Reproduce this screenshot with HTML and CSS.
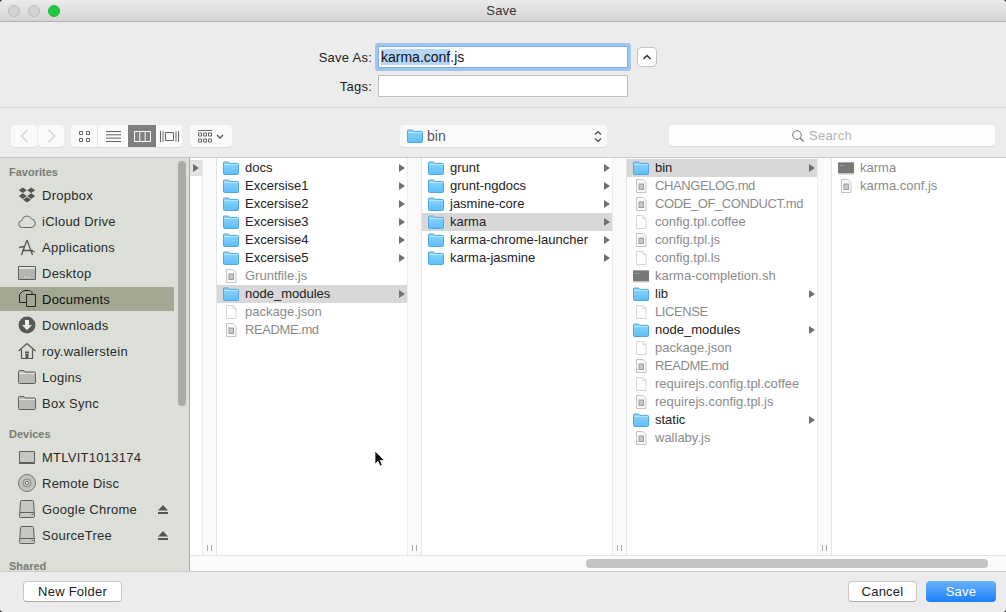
FILE: index.html
```html
<!DOCTYPE html>
<html>
<head>
  <meta charset="utf-8">
  <title>Save</title>
  <link rel="stylesheet" href="styles.css">
</head>
<body>
  <svg class="defs" aria-hidden="true">
    <defs>
      <linearGradient id="folderFill" x1="0" y1="0" x2="0" y2="1">
        <stop offset="0" stop-color="#8fd6fc"/>
        <stop offset="1" stop-color="#5fbdf6"/>
      </linearGradient>
      <symbol id="folder" viewBox="0 0 16 14">
        <path d="M.5 2a1 1 0 0 1 1-1h4l1.3 1.4h7.700a1 1 0 0 1 1 1V12.500a1 1 0 0 1-1 1h-13a1 1 0 0 1-1-1z" fill="url(#folderFill)" stroke="#4ea6e2"/>
        <path d="M1 3.500h14" stroke="#b5e5fd" fill="none"/>
      </symbol>
      <symbol id="doc" viewBox="0 0 16 14">
        <path d="M3.500.5h6.500l3 3v10h-9.500z" fill="#fafafa" stroke="#c4c4c4"/>
        <path d="M5.500 4.500h5.500v6.500h-5.500z" fill="#9c9c9c"/>
        <path d="M6.500 5.500h3.500v4.500h-3.500z" fill="#c8c8c8"/>
      </symbol>
      <symbol id="blank" viewBox="0 0 16 14">
        <path d="M3.500.5h6.500l3 3v10h-9.500z" fill="#fff" stroke="#d6d6d6"/>
        <path d="M10 .5v3h3" fill="none" stroke="#d6d6d6"/>
      </symbol>
      <symbol id="term" viewBox="0 0 16 14">
        <path d="M0 1h16v11h-16z" fill="#777976"/>
        <path d="M0 1h16v1h-16z" fill="#a8a8a8"/>
        <path d="M0 12h16v1.500h-16z" fill="#c4c4c4"/>
        <path d="M2 4.500h1.500M4.500 4.500h1.500" stroke="#86c78f"/>
      </symbol>
      <symbol id="gfolder" viewBox="0 0 18 15">
        <path d="M.5 2a1 1 0 0 1 1-1h4.500l1.300 1.500h9.200a1 1 0 0 1 1 1v9.500a1 1 0 0 1-1 1h-15a1 1 0 0 1-1-1z" fill="#b9bbb5" stroke="#5f605c"/>
        <path d="M1 4h16" stroke="#e4e5e1"/>
      </symbol>
      <symbol id="drive" viewBox="0 0 18 18">
        <path d="M3.500.5h11a1 1 0 0 1 1 1l1 15a1 1 0 0 1-1 1h-13a1 1 0 0 1-1-1l1-15a1 1 0 0 1 1-1z" fill="#c5c7c1" stroke="#5f605c"/>
        <path d="M2 12.500h14" stroke="#5f605c"/>
        <path d="M13.500 14.500h1.500" stroke="#5f605c"/>
      </symbol>
      <symbol id="eject" viewBox="0 0 10 9">
        <path d="M5 0l5 5.500h-10zM0 7h10v2h-10z" fill="#555"/>
      </symbol>
    </defs>
  </svg>

  <div class="window">
    <div class="titlebar">
      <span class="light"></span>
      <span class="light"></span>
      <span class="light green"></span>
      <span class="title">Save</span>
    </div>

    <div class="form">
      <div class="form-row">
        <label class="form-label">Save As:</label>
        <div class="field focused"><span class="selected-text">karma.conf</span>.js</div>
        <button class="disclose">
          <svg width="10" height="6" viewBox="0 0 10 6"><path d="M1.500 5l3.500-3.500 3.500 3.500" fill="none" stroke="#333" stroke-width="1.500"/></svg>
        </button>
      </div>
      <div class="form-row">
        <label class="form-label">Tags:</label>
        <div class="field"></div>
      </div>
    </div>

    <div class="toolbar">
      <div class="nav-group">
        <button class="tool nav">
          <svg width="9" height="14" viewBox="0 0 9 14"><path d="M7.500 1l-6 6 6 6" fill="none" stroke="#d4d4d4" stroke-width="1.500"/></svg>
        </button>
        <button class="tool nav">
          <svg width="9" height="14" viewBox="0 0 9 14"><path d="M1.500 1l6 6-6 6" fill="none" stroke="#d4d4d4" stroke-width="1.500"/></svg>
        </button>
      </div>
      <div class="view-group">
        <button class="view v-icons">
          <svg width="11" height="11" viewBox="0 0 11 11"><path d="M.5.5h3v3h-3zM7.500.5h3v3h-3zM.5 7.500h3v3h-3zM7.500 7.500h3v3h-3z" fill="none" stroke="#666"/></svg>
        </button>
        <button class="view v-list">
          <svg width="15" height="11" viewBox="0 0 15 11"><path d="M0 .5h15M0 3.800h15M0 7.100h15M0 10.500h15" stroke="#666"/></svg>
        </button>
        <button class="view v-cols on">
          <svg width="17" height="11" viewBox="0 0 17 11"><path d="M.5.5h16v10h-16zM5.800.5v10M11.200.5v10" fill="none" stroke="#fff"/></svg>
        </button>
        <button class="view v-flow">
          <svg width="19" height="11" viewBox="0 0 19 11"><path d="M5.500 1.500h8v8h-8zM.5 0v11M3 .5v10M16 .5v10M18.500 0v11" fill="none" stroke="#666"/></svg>
        </button>
      </div>
      <button class="tool arrange">
        <svg width="14" height="13" viewBox="0 0 14 13"><path d="M0 .5h14M.5 3h3v3h-3zM5.500 3h3v3h-3zM10.500 3h3v3h-3zM.5 9h3v3h-3zM5.500 9h3v3h-3zM10.500 9h3v3h-3z" fill="none" stroke="#666"/></svg>
        <svg width="8" height="5" viewBox="0 0 8 5"><path d="M1 1l3 3 3-3" fill="none" stroke="#555" stroke-width="1.300"/></svg>
      </button>
      <div class="location">
        <svg class="ic" width="16" height="14"><use href="#folder"/></svg>
        <span class="location-name">bin</span>
        <svg class="updown" width="8" height="13" viewBox="0 0 8 13"><path d="M1 4.500l3-3 3 3M1 8.500l3 3 3-3" fill="none" stroke="#444" stroke-width="1.200"/></svg>
      </div>
      <div class="search">
        <svg width="12" height="12" viewBox="0 0 12 12"><circle cx="5" cy="5" r="4.300" fill="none" stroke="#777"/><path d="M8 8l3.500 3.500" stroke="#777" stroke-width="1.200"/></svg>
        <span>Search</span>
      </div>
    </div>

    <div class="browser">
      <div class="sidebar">
        <div class="side-head">Favorites</div>
        <div class="side-row">
          <svg class="side-ic" viewBox="0 0 18 18"><path d="M4.800 1.500l4 2.800-4 2.800-4-2.800zM13.200 1.500l4 2.800-4 2.800-4-2.800zM4.800 7.300l4 2.800-4 2.800-4-2.800zM13.200 7.300l4 2.800-4 2.800-4-2.800zM9 11l4 2.700-4 2.800-4-2.800z" fill="#55564f"/></svg>
          <span>Dropbox</span>
        </div>
        <div class="side-row">
          <svg class="side-ic" viewBox="0 0 18 18"><path d="M4.500 15.500a3.500 3.500 0 0 1-.5-7 5 5 0 0 1 9.500-1.500 4.300 4.300 0 0 1 .3 8.500z" fill="none" stroke="#666"/></svg>
          <span>iCloud Drive</span>
        </div>
        <div class="side-row">
          <svg class="side-ic" viewBox="0 0 18 18"><path d="M9 2l5.500 15M9 2l-5.500 15M4 12.500h11M1 9.500l5-1M17 14l-3-1" fill="none" stroke="#555" stroke-width="1.300"/></svg>
          <span>Applications</span>
        </div>
        <div class="side-row">
          <svg class="side-ic" viewBox="0 0 18 18"><path d="M.5 2.500h17v13h-17z" fill="#e2e3df" stroke="#5f605c"/><path d="M1 5h16v10h-16z" fill="#b4b6b0"/><path d="M6 13h1M8.500 13h1M11 13h1" stroke="#eee"/></svg>
          <span>Desktop</span>
        </div>
        <div class="side-row on">
          <svg class="side-ic" viewBox="0 0 18 18"><path d="M7 .5h5l2 2v2h3.500v12h-9v-4h-7v-8l3-3z" fill="none" stroke="#222"/><path d="M8.500 12.500v-8h5.500" fill="none" stroke="#222"/></svg>
          <span>Documents</span>
        </div>
        <div class="side-row">
          <svg class="side-ic" viewBox="0 0 18 18"><circle cx="9" cy="9" r="8.500" fill="#595a56"/><path d="M7 4h4v5h3l-5 5-5-5h3z" fill="#eee"/></svg>
          <span>Downloads</span>
        </div>
        <div class="side-row">
          <svg class="side-ic" viewBox="0 0 18 18"><path d="M.5 9l8.500-7.500 8.500 7.500M3.500 7.500v9h11v-9" fill="none" stroke="#555" stroke-width="1.200"/><path d="M7 9.500h4v2h-4zM7.500 12h3v4.500h-3z" fill="#555"/></svg>
          <span>roy.wallerstein</span>
        </div>
        <div class="side-row">
          <svg class="side-ic" width="18" height="15"><use href="#gfolder"/></svg>
          <span>Logins</span>
        </div>
        <div class="side-row">
          <svg class="side-ic" width="18" height="15"><use href="#gfolder"/></svg>
          <span>Box Sync</span>
        </div>

        <div class="side-head gap">Devices</div>
        <div class="side-row">
          <svg class="side-ic" viewBox="0 0 18 18"><path d="M1.500 3.500h15v11h-15z" fill="#c5c7c1" stroke="#5f605c"/><path d="M1 15.500h16" stroke="#5f605c"/></svg>
          <span>MTLVIT1013174</span>
        </div>
        <div class="side-row">
          <svg class="side-ic" viewBox="0 0 18 18"><circle cx="9" cy="9" r="8.500" fill="#c2c4be" stroke="#777"/><circle cx="9" cy="9" r="4" fill="none" stroke="#8a8b86"/><circle cx="9" cy="9" r="1.700" fill="#e8e8e4" stroke="#777"/></svg>
          <span>Remote Disc</span>
        </div>
        <div class="side-row">
          <svg class="side-ic" width="18" height="18"><use href="#drive"/></svg>
          <span>Google Chrome</span>
          <svg class="eject" width="10" height="9"><use href="#eject"/></svg>
        </div>
        <div class="side-row">
          <svg class="side-ic" width="18" height="18"><use href="#drive"/></svg>
          <span>SourceTree</span>
          <svg class="eject" width="10" height="9"><use href="#eject"/></svg>
        </div>

        <div class="side-head gap">Shared</div>
        <div class="side-scroll"></div>
      </div>

      <div class="panes">
        <div class="columns">
          <div class="col stub"><div class="stub-row"></div></div>
          <div class="gutter"><span class="grip"></span></div>

          <div class="col">
            <div class="row dir"><svg class="ic" width="16" height="14"><use href="#folder"/></svg>docs</div>
            <div class="row dir"><svg class="ic" width="16" height="14"><use href="#folder"/></svg>Excersise1</div>
            <div class="row dir"><svg class="ic" width="16" height="14"><use href="#folder"/></svg>Excersise2</div>
            <div class="row dir"><svg class="ic" width="16" height="14"><use href="#folder"/></svg>Excersise3</div>
            <div class="row dir"><svg class="ic" width="16" height="14"><use href="#folder"/></svg>Excersise4</div>
            <div class="row dir"><svg class="ic" width="16" height="14"><use href="#folder"/></svg>Excersise5</div>
            <div class="row"><svg class="ic" width="16" height="14"><use href="#doc"/></svg>Gruntfile.js</div>
            <div class="row dir sel"><svg class="ic" width="16" height="14"><use href="#folder"/></svg>node_modules</div>
            <div class="row"><svg class="ic" width="16" height="14"><use href="#blank"/></svg>package.json</div>
            <div class="row caps"><svg class="ic" width="16" height="14"><use href="#doc"/></svg>README.md</div>
          </div>
          <div class="gutter"><span class="grip"></span></div>

          <div class="col">
            <div class="row dir"><svg class="ic" width="16" height="14"><use href="#folder"/></svg>grunt</div>
            <div class="row dir"><svg class="ic" width="16" height="14"><use href="#folder"/></svg>grunt-ngdocs</div>
            <div class="row dir"><svg class="ic" width="16" height="14"><use href="#folder"/></svg>jasmine-core</div>
            <div class="row dir sel"><svg class="ic" width="16" height="14"><use href="#folder"/></svg>karma</div>
            <div class="row dir"><svg class="ic" width="16" height="14"><use href="#folder"/></svg>karma-chrome-launcher</div>
            <div class="row dir"><svg class="ic" width="16" height="14"><use href="#folder"/></svg>karma-jasmine</div>
          </div>
          <div class="gutter"><span class="grip"></span></div>

          <div class="col">
            <div class="row dir sel"><svg class="ic" width="16" height="14"><use href="#folder"/></svg>bin</div>
            <div class="row caps"><svg class="ic" width="16" height="14"><use href="#doc"/></svg>CHANGELOG.md</div>
            <div class="row caps"><svg class="ic" width="16" height="14"><use href="#doc"/></svg>CODE_OF_CONDUCT.md</div>
            <div class="row"><svg class="ic" width="16" height="14"><use href="#blank"/></svg>config.tpl.coffee</div>
            <div class="row"><svg class="ic" width="16" height="14"><use href="#doc"/></svg>config.tpl.js</div>
            <div class="row"><svg class="ic" width="16" height="14"><use href="#blank"/></svg>config.tpl.ls</div>
            <div class="row"><svg class="ic" width="16" height="14"><use href="#term"/></svg>karma-completion.sh</div>
            <div class="row dir"><svg class="ic" width="16" height="14"><use href="#folder"/></svg>lib</div>
            <div class="row caps"><svg class="ic" width="16" height="14"><use href="#blank"/></svg>LICENSE</div>
            <div class="row dir"><svg class="ic" width="16" height="14"><use href="#folder"/></svg>node_modules</div>
            <div class="row"><svg class="ic" width="16" height="14"><use href="#blank"/></svg>package.json</div>
            <div class="row caps"><svg class="ic" width="16" height="14"><use href="#doc"/></svg>README.md</div>
            <div class="row"><svg class="ic" width="16" height="14"><use href="#blank"/></svg>requirejs.config.tpl.coffee</div>
            <div class="row"><svg class="ic" width="16" height="14"><use href="#doc"/></svg>requirejs.config.tpl.js</div>
            <div class="row dir"><svg class="ic" width="16" height="14"><use href="#folder"/></svg>static</div>
            <div class="row"><svg class="ic" width="16" height="14"><use href="#doc"/></svg>wallaby.js</div>
          </div>
          <div class="gutter"><span class="grip"></span></div>

          <div class="col last">
            <div class="row"><svg class="ic" width="16" height="14"><use href="#term"/></svg>karma</div>
            <div class="row"><svg class="ic" width="16" height="14"><use href="#doc"/></svg>karma.conf.js</div>
          </div>
        </div>
        <div class="hscroll"><div class="hthumb"></div></div>
      </div>
    </div>

    <div class="footer">
      <button class="btn new-folder">New Folder</button>
      <button class="btn cancel">Cancel</button>
      <button class="btn primary">Save</button>
    </div>

    <svg class="cursor" width="12" height="18" viewBox="0 0 12 18"><path d="M1 1v13l3-2.800 2 4.800 2.200-1-2-4.600h4.300z" fill="#000" stroke="#fff" stroke-width=".8"/></svg>
  </div>
</body>
</html>
```

FILE: styles.css
```css
html, body {
  margin: 0;
  padding: 0;
  background-color: #2a2a2a;
}

body {
  width: 1006px;
  height: 612px;
  overflow: hidden;
  font-family: "Liberation Sans", Arial, sans-serif;
  font-size: 13px;
  color: #222;
}

button {
  font-family: inherit;
  font-size: 13px;
  padding: 0;
  margin: 0;
  border: none;
  background: none;
}

svg {
  display: block;
}

.defs {
  position: absolute;
  width: 0;
  height: 0;
}

.window {
  position: relative;
  width: 1006px;
  height: 612px;
  display: flex;
  flex-direction: column;
  background-color: #ececec;
  border-radius: 4px;
  overflow: hidden;
}

/* Title bar */
.titlebar {
  flex: none;
  height: 21px;
  display: flex;
  align-items: center;
  gap: 8px;
  padding-left: 8px;
  background: linear-gradient(#ebebeb, #d4d4d4);
  border-bottom: 1px solid #b1b1b1;
  position: relative;
}

.light {
  width: 10px;
  height: 10px;
  border-radius: 50%;
  background-color: #d3d3d3;
  border: 1px solid #bdbdbd;
}

.light.green {
  background-color: #20c73f;
  border-color: #1fb83a;
}

.title {
  position: absolute;
  left: 0;
  right: 3px;
  text-align: center;
  color: #333;
  letter-spacing: .2px;
}

/* Save As form */
.form {
  flex: none;
  height: 86px;
  box-sizing: border-box;
  padding-top: 24px;
  display: flex;
  flex-direction: column;
  gap: 7px;
  border-bottom: 1px solid #d3d3d3;
}

.form-row {
  display: flex;
  align-items: center;
  gap: 6px;
}

.form-label {
  width: 372px;
  text-align: right;
  color: #222;
  letter-spacing: .25px;
}

.field {
  box-sizing: border-box;
  width: 250px;
  height: 22px;
  line-height: 20px;
  padding-left: 2px;
  background-color: #fff;
  border: 1px solid #bdbdbd;
  font-size: 14px;
  color: #111;
}

.field.focused {
  border-color: #7faee6;
  box-shadow: 0 0 0 3px #a1c5f2;
  border-radius: 1px;
}

.selected-text {
  background-color: #b4d4f8;
}

.disclose {
  margin-left: 3px;
  width: 20px;
  height: 20px;
  display: flex;
  align-items: center;
  justify-content: center;
  background-color: #fff;
  border: 1px solid #c4c4c4;
  border-radius: 4px;
  box-sizing: border-box;
}

/* Toolbar */
.toolbar {
  flex: none;
  height: 50px;
  box-sizing: border-box;
  padding: 17px 11px 0;
  display: flex;
  align-items: flex-start;
  border-bottom: 1px solid #c9c9c9;
}

.nav-group {
  display: flex;
  gap: 1px;
}

.tool {
  height: 22px;
  display: flex;
  align-items: center;
  justify-content: center;
  background-color: #fafafa;
  border-radius: 4px;
  box-shadow: 0 1px 0 #dcdcdc;
}

.nav {
  width: 26px;
}

.view-group {
  margin-left: 7px;
  display: flex;
  height: 22px;
  border-radius: 4px;
  overflow: hidden;
  background-color: #fafafa;
  box-shadow: 0 1px 0 #dcdcdc;
}

.view {
  height: 22px;
  display: flex;
  align-items: center;
  justify-content: center;
}

.v-icons {
  width: 27px;
  border-right: 1px solid #e2e2e2;
  box-sizing: border-box;
}

.v-list {
  width: 30px;
}

.v-cols {
  width: 28px;
}

.v-flow {
  width: 26px;
}

.view.on {
  background-color: #7f7f7f;
}

.arrange {
  margin-left: 8px;
  width: 42px;
  gap: 4px;
}

.location {
  margin-left: 168px;
  width: 207px;
  height: 22px;
  box-sizing: border-box;
  padding: 0 5px 0 7px;
  display: flex;
  align-items: center;
  gap: 4px;
  background-color: #fafafa;
  border-radius: 4px;
  box-shadow: 0 1px 0 #dcdcdc;
  color: #555;
  font-size: 14px;
}

.location-name {
  flex: 1;
}

.search {
  margin-left: 62px;
  width: 326px;
  height: 21px;
  box-sizing: border-box;
  padding-right: 20px;
  display: flex;
  align-items: center;
  justify-content: center;
  gap: 5px;
  background-color: #fdfdfd;
  border-radius: 4px;
  box-shadow: 0 1px 0 #dcdcdc;
  color: #b2b2b2;
  letter-spacing: .3px;
}

/* Browser: sidebar + columns */
.browser {
  flex: 1;
  min-height: 0;
  display: flex;
}

.sidebar {
  position: relative;
  flex: none;
  width: 190px;
  box-sizing: border-box;
  padding-top: 6px;
  background-color: #dcdfd8;
  border-right: 1px solid #a9aaa6;
  overflow: hidden;
  display: flex;
  flex-direction: column;
  gap: 2px;
}

.side-head {
  height: 16px;
  line-height: 16px;
  padding-left: 9px;
  margin-bottom: 1px;
  font-size: 11px;
  font-weight: bold;
  color: #7a7b76;
}

.side-head.gap {
  margin-top: 9px;
}

.side-row {
  flex: none;
  width: 174px;
  height: 24px;
  box-sizing: border-box;
  padding: 0 6px 0 18px;
  display: flex;
  align-items: center;
  gap: 6px;
  color: #2b2b2b;
  letter-spacing: .25px;
}

.side-row.on {
  background-color: #a3a892;
  color: #111;
}

.side-ic {
  flex: none;
  width: 18px;
  height: 18px;
}

.eject {
  margin-left: auto;
}

.side-scroll {
  position: absolute;
  left: 178px;
  top: 3px;
  width: 8px;
  height: 245px;
  border-radius: 4px;
  background-color: #a9aca4;
}

.panes {
  flex: 1;
  min-width: 0;
  display: flex;
  flex-direction: column;
  background-color: #fff;
}

.columns {
  flex: 1;
  min-height: 0;
  display: flex;
}

.col {
  flex: none;
  width: 190px;
  box-sizing: border-box;
  padding-top: 1px;
  overflow: hidden;
}

.col.stub {
  width: 12px;
}

.col.last {
  flex: 1;
}

.stub-row {
  height: 16px;
  margin-top: 1px;
  background-color: #e2e2e2;
  position: relative;
}

.stub-row::after {
  content: "";
  position: absolute;
  left: 3px;
  top: 4px;
  border-left: 6px solid #6f6f6f;
  border-top: 4px solid transparent;
  border-bottom: 4px solid transparent;
}

.gutter {
  flex: none;
  width: 15px;
  box-sizing: border-box;
  background-color: #fafafa;
  border-left: 1px solid #ececec;
  border-right: 1px solid #e4e4e4;
  display: flex;
  align-items: flex-end;
  justify-content: center;
  padding-bottom: 4px;
}

.grip {
  width: 3px;
  height: 6px;
  border-left: 1px solid #aaa;
  border-right: 1px solid #aaa;
}

.row {
  position: relative;
  height: 18px;
  box-sizing: border-box;
  padding: 0 0 1px 6px;
  display: flex;
  align-items: center;
  gap: 6px;
  white-space: nowrap;
  color: #8b8b8b;
}

.row.dir {
  color: #222;
}

.row.caps {
  letter-spacing: -.4px;
}

.row.sel {
  background-color: #d8d8d8;
}

.row.dir::after {
  content: "";
  position: absolute;
  right: 2px;
  top: 5px;
  border-left: 6px solid #707070;
  border-top: 4px solid transparent;
  border-bottom: 4px solid transparent;
}

.ic {
  flex: none;
}

.hscroll {
  flex: none;
  height: 16px;
  box-sizing: border-box;
  padding: 3px 18px 3px 396px;
  background-color: #fafafa;
  border-top: 1px solid #e4e4e4;
  display: flex;
}

.hthumb {
  flex: 1;
  border-radius: 4px;
  background-color: #c4c4c4;
}

/* Footer */
.footer {
  flex: none;
  height: 41px;
  box-sizing: border-box;
  padding: 9px 10px 0 23px;
  display: flex;
  align-items: flex-start;
  background-color: #ececec;
  border-top: 1px solid #cdcdcd;
}

.btn {
  height: 21px;
  box-sizing: border-box;
  background-color: #fff;
  border: 1px solid #c8c8c8;
  border-bottom-color: #acacac;
  border-radius: 4px;
  color: #222;
  letter-spacing: .25px;
}

.new-folder {
  width: 99px;
}

.cancel {
  margin-left: auto;
  width: 69px;
}

.primary {
  margin-left: 9px;
  width: 70px;
  border: none;
  background: linear-gradient(#6cb3fa, #1a7efb);
  color: #fff;
}

/* Mouse pointer lying over the window */
.cursor {
  position: absolute;
  left: 374px;
  top: 450px;
}
```
